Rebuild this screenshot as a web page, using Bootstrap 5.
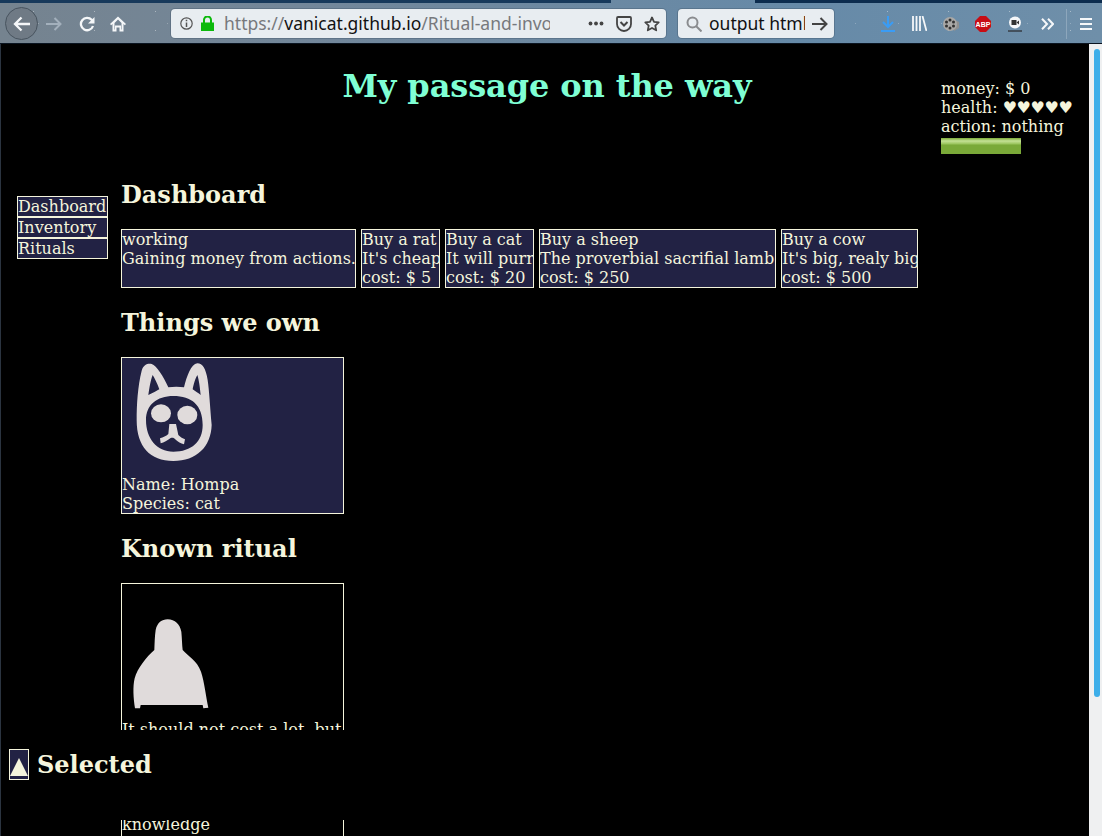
<!DOCTYPE html>
<html lang="en"><head><meta charset="utf-8"><title>My passage on the way</title>
<link href="https://cdn.jsdelivr.net/npm/bootstrap@5.3.0/dist/css/bootstrap.min.css" rel="stylesheet">
<style>
html,body{height:836px;overflow:hidden;background:#000}
.shell{height:836px;border-left:1px solid #2b3440;font-family:"DejaVu Serif",serif;font-size:16px;line-height:19px;color:#f5f5dc}
.chrome{height:44px;font-family:"Noto Sans",sans-serif;margin-left:-1px;padding:3px 0 0 5px;
background:
linear-gradient(90deg,#17395b 0,#17395b 611px,transparent 611px,transparent 755px,#0c2c4e 755px) 0 0/100% 3px no-repeat,
linear-gradient(#0a1420,#0a1420) 0 43px/100% 1px no-repeat,
radial-gradient(circle,rgba(255,255,255,.4) 0,rgba(255,255,255,.4) .5px,transparent 1px) 3px 2px/61px 19px,
radial-gradient(circle,rgba(255,255,255,.25) 0,rgba(255,255,255,.25) .5px,transparent 1px) 17px 9px/43px 29px,
linear-gradient(90deg,#75838f 0,#73879a 300px,#668aa8 800px,#6f8fa9 1102px)}
.backb{width:33px;height:33px;border-radius:50%;background:#6f7a85;border:1px solid #48545f}
.tool{display:block;flex:none}
.t-fwd{margin-left:8px}.t-rel{margin-left:17px}.t-home{margin-left:15px}
.urlb{width:495px;height:29px;margin-left:45px;background:#e8edf1;border-radius:4px;font-size:17.500px;line-height:29px;color:#77797d;white-space:nowrap;overflow:hidden;padding-left:9px;box-shadow:0 0 0 1px rgba(60,80,100,.35)}
.urlb b{font-weight:400;color:#111}
.t-lock{margin-left:8px}
.urlt{width:326px;overflow:hidden;margin-left:10px}
.t-dots{margin-left:38px}.t-pock,.t-star{margin-left:12px}
.srch{width:156px;height:29px;margin-left:12px;background:#e8edf1;border-radius:4px;font-size:17.500px;line-height:29px;color:#111;white-space:nowrap;padding-left:8px;box-shadow:0 0 0 1px rgba(60,80,100,.35)}
.srch span{width:96px;overflow:hidden;margin-left:7px}
.t-go{margin-left:7px}
.t-dl{margin-left:47px}.t-lib{margin-left:17px}.t-film,.t-abp{margin-left:16px}.t-vid{margin-left:17px}.t-more{margin-left:19px}
.vsep{width:1px;height:30px;margin-left:12px;background:rgba(255,255,255,.22)}
.t-menu{margin-left:13px}
.view{height:792px;position:relative;overflow:hidden}
.sbar{width:13px;background:#eff0f1;padding:5px 2px 0 5px;flex:none}
.sthumb{height:648px;background:#3daee9;border-radius:3px}
.pagew{width:1088px;min-width:0}
.ttl{width:1088px;height:91px;padding-left:4px}
.ttl h1{font-size:32px;line-height:38px;font-weight:700;color:#7fffd4;margin:0;padding-top:23px;text-align:center;letter-spacing:-.1px;font-family:"DejaVu Serif",serif}
.stat{position:absolute;left:940px;top:35px;width:140px}
.hearts{letter-spacing:-.4px}
.bar0{width:80px;height:16px;margin-top:2px;background:linear-gradient(#7cab38 0,#c5e195 3px,#9ac45c 6px,#7aa938 7px,#7aa938 100%)}
.cols{padding-left:16px}
.side{width:91px;margin-top:61px;margin-right:13px;flex:none}
.sitem{height:21px;background:#222244;border:1px solid #f5f5dc;overflow:hidden}
.mainc{margin-top:46px}
.mainc h2{font-size:24px;line-height:28px;font-weight:700;margin:0;font-family:"DejaVu Serif",serif;color:#f5f5dc}
.mainc h2.hnext{margin-top:21px}
.rowt{margin-top:20px;gap:5px}
.tile{background:#222244;border:1px solid #f5f5dc;height:59px;overflow:hidden;white-space:nowrap}
.w1{width:235px}.w2{width:79px}.w3{width:89px}.w4{width:237px}.w5{width:137px}
.own{margin-top:20px;width:223px;height:157px;background:#222244;border:1px solid #f5f5dc;overflow:hidden}
.rit{margin-top:20px;width:223px;background:#000;border:1px solid #f5f5dc;border-bottom:0;height:300px;overflow:hidden;white-space:nowrap}
.pic-c{display:block;width:100px;height:117px}
.pic-r{display:block;width:100px;height:136px}
.gapt{height:76px}
.selb{position:absolute;left:0;right:13px;top:686px;height:90px;background:#000;padding-left:8px;padding-top:19px}
.selb h2{font-size:24px;line-height:28px;font-weight:700;margin:2px 0 0 8px;color:#f5f5dc;font-family:"DejaVu Serif",serif}
.selic{width:20px;height:31px;background:#222244;border:1px solid #f5f5dc;display:block}
</style></head><body>
<div class="shell">
<div class="chrome d-flex align-items-center">
<div class="backb d-flex align-items-center justify-content-center"><svg width="18" height="16" viewBox="0 0 18 16"><path d="M8.500 1.500 2 8l6.500 6.500M2.500 8H17" fill="none" stroke="#f5f7f9" stroke-width="2.300"/></svg></div>
<svg class="tool t-fwd" width="16" height="14" viewBox="0 0 16 14"><path d="M8.500 1 14.500 7l-6 6M14 7H0" fill="none" stroke="#a3b0bc" stroke-width="2"/></svg>
<svg class="tool t-rel" width="16" height="16" viewBox="0 0 16 16"><path d="M14 10a6.200 6.200 0 1 1-1.300-6.200L14 5.500" fill="none" stroke="#f5f7f9" stroke-width="2.300"/><path d="M15.500 1v6.500H9z" fill="#f5f7f9"/></svg>
<svg class="tool t-home" width="16" height="16" viewBox="0 0 16 16"><path d="M8 .5 0 8l1.200 1.300L2.500 8.100V15.500h4v-4h3v4h4V8.100l1.300 1.200L16 8zM4.500 7 8 3.600 11.500 7v6.500h-.5v-4H5v4h-.5z" fill="#f5f7f9" fill-rule="evenodd"/></svg>
<div class="urlb d-flex align-items-center">
<svg class="tool" width="13" height="13" viewBox="0 0 13 13"><circle cx="6.500" cy="6.500" r="5.700" fill="none" stroke="#555" stroke-width="1.200"/><path d="M6.500 5.500v4.500M6.500 2.800v1.500" stroke="#555" stroke-width="1.500"/></svg>
<svg class="tool t-lock" width="13" height="15" viewBox="0 0 13 15"><path d="M0 6.500h13V15H0z" fill="#0cb90c"/><path d="M3 7V4a3.500 3.500 0 0 1 7 0v3" fill="none" stroke="#0cb90c" stroke-width="2"/></svg>
<div class="urlt">https://<b>vanicat.github.io</b>/Ritual-and-invo</div>
<svg class="tool t-dots" width="16" height="5" viewBox="0 0 16 5"><circle cx="2.500" cy="2.500" r="1.900" fill="#444"/><circle cx="8" cy="2.500" r="1.900" fill="#444"/><circle cx="13.500" cy="2.500" r="1.900" fill="#444"/></svg>
<svg class="tool t-pock" width="16" height="16" viewBox="0 0 16 16"><path d="M2 1h12a1 1 0 0 1 1 1v6a7 7 0 0 1-14 0V2a1 1 0 0 1 1-1z" fill="none" stroke="#444" stroke-width="1.800"/><path d="M4.500 6 8 9.500 11.500 6" fill="none" stroke="#444" stroke-width="2"/></svg>
<svg class="tool t-star" width="16" height="16" viewBox="0 0 16 16"><path d="M8 1.500l2 4.300 4.700.6-3.400 3.200.9 4.700L8 12l-4.200 2.300.9-4.700L1.300 6.400 6 5.800z" fill="none" stroke="#444" stroke-width="1.800" stroke-linejoin="round"/></svg>
</div>
<div class="srch d-flex align-items-center">
<svg class="tool" width="16" height="16" viewBox="0 0 16 16"><circle cx="6.500" cy="6.500" r="5" fill="none" stroke="#8a8c8f" stroke-width="2"/><path d="M10 10l5.500 5.500" stroke="#8a8c8f" stroke-width="2"/></svg>
<span>output html</span>
<svg class="tool t-go" width="16" height="14" viewBox="0 0 16 14"><path d="M8.500 1 14.500 7l-6 6M14 7H0" fill="none" stroke="#444" stroke-width="2"/></svg>
</div>
<svg class="tool t-dl" width="14" height="16" viewBox="0 0 14 16"><path d="M7 0v10M2 6l5 5 5-5" fill="none" stroke="#3a9cf5" stroke-width="2"/><path d="M0 15h14" stroke="#3a9cf5" stroke-width="2"/></svg>
<svg class="tool t-lib" width="15" height="15" viewBox="0 0 15 15"><path d="M1 0v15M4.500 0v15M8 0v15M10.500 0l4 15" fill="none" stroke="#f5f7f9" stroke-width="1.800"/></svg>
<svg class="tool t-film" width="16" height="16" viewBox="0 0 16 16"><path d="M10 3l6 3v6l-5 3z" fill="#8f9090"/><circle cx="7" cy="8" r="7" fill="#a9a8a6"/><circle cx="7" cy="4" r="1.500" fill="#333"/><circle cx="7" cy="12" r="1.500" fill="#333"/><circle cx="3.500" cy="6" r="1.500" fill="#333"/><circle cx="10.500" cy="6" r="1.500" fill="#333"/><circle cx="3.500" cy="10" r="1.500" fill="#333"/><circle cx="10.500" cy="10" r="1.500" fill="#333"/></svg>
<svg class="tool t-abp" width="16" height="16" viewBox="0 0 16 16"><path d="M5 0h6l5 5v6l-5 5H5l-5-5V5z" fill="#c80d14"/><text x="8" y="10.500" font-size="7" font-weight="700" text-anchor="middle" fill="#fff" font-family="Liberation Sans, sans-serif">ABP</text></svg>
<svg class="tool t-vid" width="14" height="16" viewBox="0 0 14 16"><circle cx="7" cy="6.500" r="6" fill="#f5f7f9"/><rect x="3.500" y="4" width="5" height="5" fill="#333"/><path d="M8.500 6.500 11 4.500v4z" fill="#333"/><path d="M0 15h14" stroke="#3f4a55" stroke-width="1.800"/></svg>
<svg class="tool t-more" width="13" height="12" viewBox="0 0 13 12"><path d="M1 .8 6 6 1 11.200M7 .8 12 6 7 11.200" fill="none" stroke="#f5f7f9" stroke-width="2"/></svg>
<div class="vsep"></div>
<svg class="tool t-menu" width="12" height="12" viewBox="0 0 12 12"><path d="M0 1h12M0 6h12M0 11h12" stroke="#f5f7f9" stroke-width="2"/></svg>
</div>
<div class="view d-flex">
<div class="pagew flex-grow-1">
<div class="ttl"><h1>My passage on the way</h1></div>
<div class="stat">money: $ 0<br>health: <span class="hearts">♥♥♥♥♥</span><br>action: nothing<div class="bar0"></div></div>
<div class="cols d-flex">
<nav class="side"><div class="sitem">Dashboard</div><div class="sitem">Inventory</div><div class="sitem">Rituals</div></nav>
<div class="mainc">
<h2>Dashboard</h2>
<div class="d-flex rowt">
<div class="tile w1">working<br>Gaining money from actions.</div>
<div class="tile w2">Buy a rat<br>It's cheap<br>cost: $ 5</div>
<div class="tile w3">Buy a cat<br>It will purr<br>cost: $ 20</div>
<div class="tile w4">Buy a sheep<br>The proverbial sacrifial lamb<br>cost: $ 250</div>
<div class="tile w5">Buy a cow<br>It's big, realy big<br>cost: $ 500</div>
</div>
<h2 class="hnext">Things we own</h2>
<div class="own">
<svg class="pic-c" viewBox="36 24 300 351" fill="#e0dbdb"><path fill-rule="evenodd" d="M80 210C80 165 83 110 95 62C101 44 112 40 125 42C140 46 160 80 175 112C190 110 208 110 222 112C230 80 243 42 262 40C278 40 287 55 293 90C298 125 300 170 305 225C303 290 260 333 190 333C120 333 80 290 80 210ZM108 210C108 265 140 305 190 305C245 305 278 275 278 225C278 165 245 138 190 138C140 138 108 165 108 210ZM115 135C130 128 142 122 148 118C142 100 134 85 128 75C122 90 118 115 115 135ZM248 118C256 124 266 130 272 135C270 115 267 90 262 75C256 85 250 105 248 118Z"/><ellipse cx="153" cy="190" rx="30" ry="27"/><ellipse cx="232" cy="195" rx="30" ry="28"/><path d="M178 222H198L205 255C212 262 218 265 225 268L222 283C212 280 204 275 198 270C192 262 186 262 182 264C172 272 162 277 152 280L150 265C160 262 168 258 175 252Z"/></svg>
Name: Hompa<br>Species: cat
</div>
<h2 class="hnext">Known ritual</h2>
<div class="rit">
<svg class="pic-r" viewBox="366 27 300 408" fill="#e0dbdb"><path d="M405 400C400 370 398 335 404 310C412 280 440 245 463 225C464 205 464 185 467 165C472 143 485 133 503 133C525 133 540 148 544 170C546 190 546 210 548 225C565 245 590 255 603 290C613 320 618 365 625 398L610 400L608 390H422L420 400Z"/></svg>
It should not cost a lot, but
<div class="gapt"></div>
knowledge
</div>
</div>
</div>
</div>
<div class="sbar"><div class="sthumb"></div></div>
<div class="selb d-flex align-items-start">
<svg class="selic" viewBox="0 0 18 29"><path d="M9 8 0 26h18z" fill="#f5f5dc"/></svg>
<h2>Selected</h2>
</div>
</div>
</div>
</body></html>
